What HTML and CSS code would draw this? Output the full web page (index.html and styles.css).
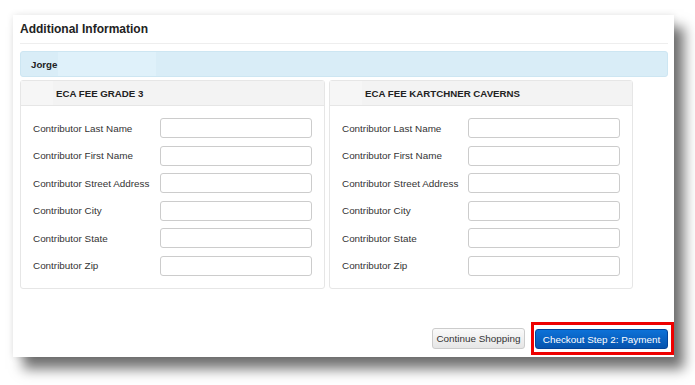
FILE: index.html
```html
<!DOCTYPE html>
<html lang="en">
<head>
  <meta charset="UTF-8">
  <title>Additional Information</title>
  <link rel="stylesheet" href="styles.css">
</head>
<body>

  <div class="card">
    <h3 class="card-title">Additional Information</h3>

    <div class="student-bar">
      <span class="student-name">Jorge</span>
      <span class="student-fill"></span>
    </div>

    <div class="panels">
      <div class="panel panel-left">
        <div class="panel-head"><span class="head-block"></span>ECA FEE GRADE 3</div>
        <div class="panel-body">
          <div class="row"><label>Contributor Last Name</label><input type="text"></div>
          <div class="row"><label>Contributor First Name</label><input type="text"></div>
          <div class="row"><label>Contributor Street Address</label><input type="text"></div>
          <div class="row"><label>Contributor City</label><input type="text"></div>
          <div class="row"><label>Contributor State</label><input type="text"></div>
          <div class="row"><label>Contributor Zip</label><input type="text"></div>
        </div>
      </div>
      <div class="panel panel-right">
        <div class="panel-head"><span class="head-block"></span>ECA FEE KARTCHNER CAVERNS</div>
        <div class="panel-body">
          <div class="row"><label>Contributor Last Name</label><input type="text"></div>
          <div class="row"><label>Contributor First Name</label><input type="text"></div>
          <div class="row"><label>Contributor Street Address</label><input type="text"></div>
          <div class="row"><label>Contributor City</label><input type="text"></div>
          <div class="row"><label>Contributor State</label><input type="text"></div>
          <div class="row"><label>Contributor Zip</label><input type="text"></div>
        </div>
      </div>
    </div>

    <div class="actions">
      <button class="btn btn-default">Continue Shopping</button>
      <div class="highlight">
        <button class="btn btn-primary">Checkout Step 2: Payment</button>
      </div>
    </div>
  </div>

</body>
</html>
```

FILE: styles.css
```css
html, body {
  margin: 0;
  padding: 0;
  background: #fff;
  font-family: 'Liberation Sans', Arial, sans-serif;
  color: #333;
}

body {
  min-height: 385px;
  overflow: hidden;
}

.card {
  box-sizing: border-box;
  margin: 15px 0 0 13px;
  width: 661px;
  height: 342px;
  padding: 0 6px 2px 7px;
  background: #fff;
  display: flex;
  flex-direction: column;
  box-shadow: 0 0 7px rgba(0,0,0,0.1), 10px 12px 12px rgba(0,0,0,0.55);
}

.card-title {
  margin: 0;
  padding: 6px 0 6px;
  font-size: 12px;
  line-height: 16px;
  font-weight: bold;
  color: #222;
  border-bottom: 1px solid #eee;
}

.student-bar {
  margin-top: 7px;
  height: 24px;
  display: flex;
  align-items: center;
  background: #d9edf7;
  border: 1px solid #cde6f2;
  border-radius: 3px;
}

.student-name {
  padding-left: 10px;
  width: 27px;
  font-size: 9.7px;
  font-weight: bold;
  color: #222;
}

.student-fill {
  width: 98px;
  height: 24px;
  background: #dff1fa;
}

.panels {
  margin-top: 3px;
  display: flex;
  gap: 4px;
}

.panel {
  box-sizing: border-box;
  border: 1px solid #e6e6e6;
  border-radius: 3px;
}

.panel-left { width: 305px; }
.panel-right { width: 304px; }

.panel-head {
  height: 24px;
  display: flex;
  align-items: center;
  background: #f3f3f3;
  border-bottom: 1px solid #e6e6e6;
  font-size: 9.7px;
  font-weight: bold;
  color: #222;
}

.head-block {
  width: 32px;
  height: 24px;
  margin-right: 3px;
  background: #f6f6f6;
}

.panel-body {
  padding: 12px;
  display: flex;
  flex-direction: column;
  gap: 7.6px;
}

.row {
  display: flex;
  align-items: center;
}

.row label {
  width: 127px;
  font-size: 9.9px;
  color: #333;
  white-space: nowrap;
}

.row input {
  box-sizing: border-box;
  width: 152px;
  height: 20px;
  margin: 0;
  border: 1px solid #ccc;
  border-radius: 3px;
  background: #fff;
}

.panel-right .row label { width: 126px; }

.actions {
  margin-top: auto;
  margin-right: -6px;
  display: flex;
  justify-content: flex-end;
  align-items: flex-end;
  gap: 6px;
}

.btn {
  box-sizing: border-box;
  font-family: 'Liberation Sans', Arial, sans-serif;
  font-size: 9.9px;
  height: 21px;
  padding: 0;
  border-radius: 3px;
  white-space: nowrap;
  cursor: pointer;
}

.btn-default {
  width: 93px;
  margin-bottom: 6px;
  color: #333;
  background: linear-gradient(to bottom, #fafafa, #e6e6e6);
  border: 1px solid #ccc;
}

.highlight {
  border: 3px solid #ee0000;
  padding: 4px 3px 3px 1px;
}

.btn-primary {
  display: block;
  width: 133px;
  height: 20px;
  color: #fff;
  background: linear-gradient(to bottom, #0d72d8, #0553ae);
  border: 1px solid #04449a;
}
```
